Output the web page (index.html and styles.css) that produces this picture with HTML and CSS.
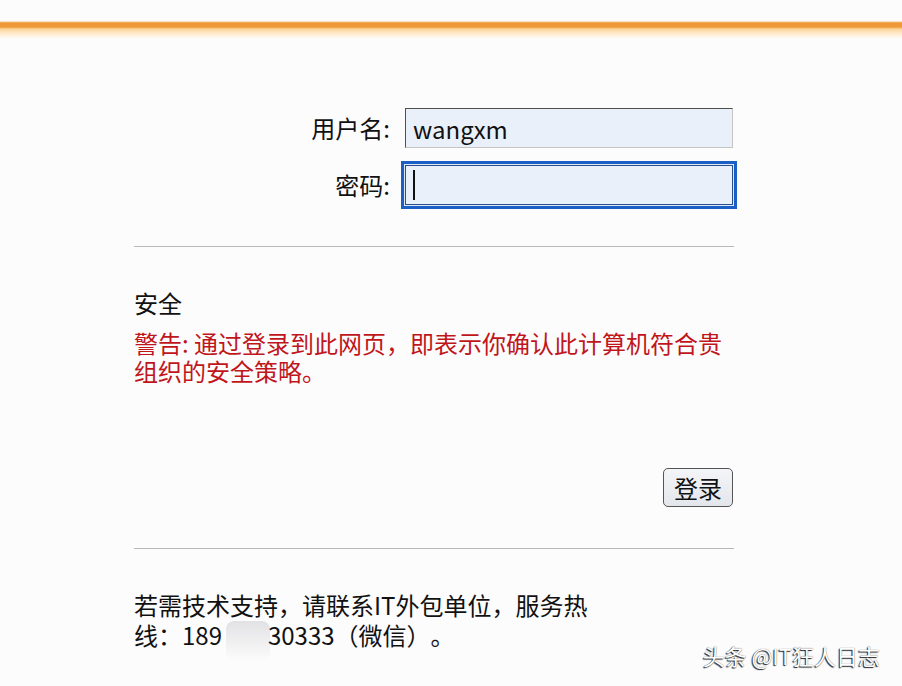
FILE: index.html
```html
<!DOCTYPE html>
<html lang="zh-CN">
<head>
    <meta charset="UTF-8">
    <meta name="viewport" content="width=device-width, initial-scale=1.0">
    <title>登录</title>
    <link rel="stylesheet" href="styles.css">
</head>
<body>
    <div class="topbar"></div>

    <div id="page">
        <form id="login-form" class="login-form">
            <label for="username">用户名:</label>
            <input type="text" id="username" name="username" value="wangxm">

            <label for="password">密码:</label>
            <div class="field-wrap">
                <input type="password" id="password" name="password" class="focused">
                <span class="caret"></span>
            </div>
        </form>

        <hr>

        <div class="security">
            <h2>安全</h2>
            <p class="warning">警告: 通过登录到此网页，即表示你确认此计算机符合贵组织的安全策略。</p>
        </div>

        <div class="buttons">
            <button type="submit" form="login-form">登录</button>
        </div>

        <hr class="bottom-rule">

        <p class="support">若需技术支持，请联系IT外包单位，服务热线：189<span class="masked"></span>30333（微信）。</p>
    </div>

    <div class="watermark">头条 @IT狂人日志</div>
</body>
</html>
```

FILE: styles.css
```css
body {
    font-family: "Microsoft YaHei", "Noto Sans CJK SC", "Noto Sans", sans-serif;
    background-color: #fcfcfd;
    color: #111;
    margin: 0;
    padding: 0;
    text-spacing-trim: space-all;
}

.topbar {
    height: 40px;
    background: linear-gradient(to bottom,
        #fcfcfd 0, #fcfcfd 21px,
        #f5c27a 22px, #ee9636 23px, #ef9a3a 27px,
        #fcd49a 29px, #fee8c6 33px, #fcfcfd 39px);
}

#page {
    width: 600px;
    margin-left: 134px;
}

.login-form {
    display: grid;
    grid-template-columns: 256px 328px;
    column-gap: 15px;
    row-gap: 17px;
    align-items: center;
    padding-top: 68px;
}

.login-form label {
    text-align: right;
    font-size: 24px;
    line-height: 40px;
}

.login-form input {
    width: 328px;
    height: 40px;
    box-sizing: border-box;
    padding: 0 7px;
    border: 1px solid;
    border-color: #505050 #c4c4c4 #c4c4c4 #505050;
    background-color: #e9f0fa;
    font-family: inherit;
    font-size: 24px;
    color: #111;
    outline: none;
}

.login-form input.focused {
    border-color: #2a4e8c;
    box-shadow: 0 0 0 1px #dfe8f6, 0 0 0 4px #1b5fc6;
}

.field-wrap {
    position: relative;
    height: 40px;
}

.caret {
    position: absolute;
    left: 8px;
    top: 5px;
    width: 2px;
    height: 30px;
    background-color: #111;
}

hr {
    border: 0;
    border-top: 1px solid #b8b8bc;
    margin: 41px 0 0;
}

.security {
    padding-top: 41px;
}

.security h2 {
    margin: 0;
    font-size: 24px;
    font-weight: normal;
    line-height: 29px;
}

.warning {
    width: 600px;
    margin: 12px 0 0;
    font-size: 24px;
    line-height: 28px;
    color: #c0161b;
}

.buttons {
    display: flex;
    justify-content: flex-end;
    padding-top: 83px;
}

.buttons button {
    width: 70px;
    height: 39px;
    margin-right: 1px;
    padding: 0;
    border: 1px solid #555;
    border-radius: 5px;
    background: linear-gradient(to bottom, #f4f5f8, #e3e6eb);
    font-family: inherit;
    font-size: 24px;
    line-height: 36px;
    color: #111;
    cursor: pointer;
}

.bottom-rule {
    margin-top: 41px;
}

.support {
    width: 470px;
    margin: 41px 0 0;
    font-size: 24px;
    line-height: 30px;
}

.masked {
    display: inline-block;
    width: 44px;
    height: 40px;
    margin: 0 -2px 0 4px;
    vertical-align: -16px;
    border-radius: 8px;
    background: linear-gradient(to bottom, #e2e2e4, #f4f4f5 70%, #fcfcfd);
}

.watermark {
    position: absolute;
    right: 22px;
    top: 641px;
    font-size: 22px;
    line-height: 28px;
    color: #fff;
    text-shadow: -1px 1px 1px #222, 0 0 1px #444;
}
```
